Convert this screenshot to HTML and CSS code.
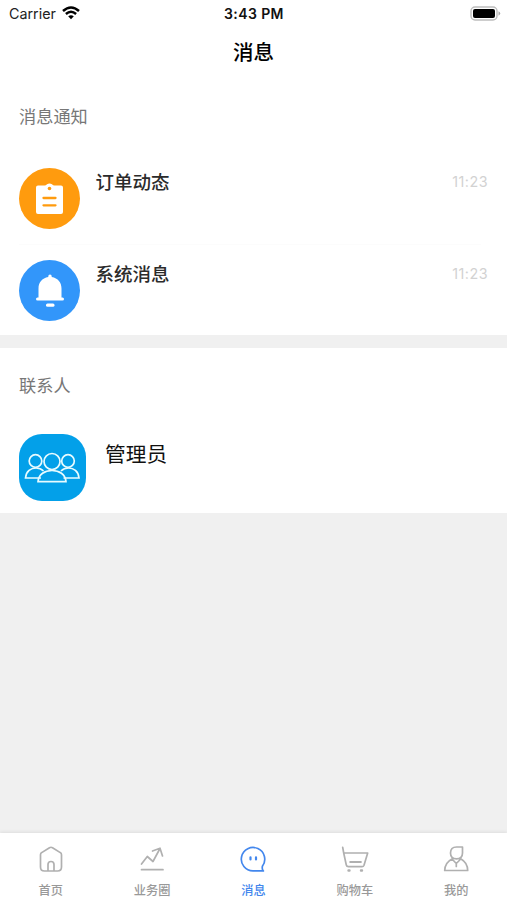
FILE: index.html
```html
<!DOCTYPE html>
<html lang="zh-CN">
<head>
<meta charset="utf-8">
<meta name="viewport" content="width=device-width, initial-scale=1">
<title>消息</title>
<link rel="stylesheet" href="styles.css">
</head>
<body>
<div class="app">
  <header class="status">
    <div class="carrier"><span>Carrier</span>
      <svg width="18" height="14" viewBox="0 0 18 14" fill="none" stroke="#000" stroke-width="2.5"><path d="M1 5Q9-2 17 5M3.900 8Q9 3.600 14.100 8"/><path d="M6.200 10.300Q9 8.200 11.800 10.300L9 13.200z" fill="#000" stroke="none"/></svg>
    </div>
    <div class="clock">3:43 PM</div>
    <svg class="battery" width="31" height="15" viewBox="0 0 31 15"><rect x="1" y="1" width="26" height="13" rx="4" fill="#fff" stroke="#bdbdbd" stroke-width="1.400"/><rect x="3" y="3" width="22" height="9" rx="2" fill="#000"/><path d="M28.500 5.300Q32 7.500 28.500 9.700z" fill="#aaa"/></svg>
  </header>
  <h1 class="title">消息</h1>
  <section class="notices">
    <h2 class="heading">消息通知</h2>
    <div class="row">
      <svg class="round" viewBox="0 0 61 61"><circle cx="30.500" cy="30.500" r="30.500" fill="#ff9b0e"/><path d="M19 17.500h6.500Q27 17.500 28 16.300Q30.500 14.500 33 16.300Q34 17.500 35.500 17.500H42Q44 17.500 44 19.500V44Q44 46 42 46H19Q17 46 17 44V19.500Q17 17.500 19 17.500z" fill="#fff"/><circle cx="30.500" cy="20.500" r="1.800" fill="#ff9b0e"/><path d="M24.500 30h12M24.500 37.300h12" stroke="#ff9b0e" stroke-width="2.300" stroke-linecap="round"/></svg>
      <span class="name">订单动态</span><time>11:23</time>
    </div>
    <div class="line"></div>
    <div class="row">
      <svg class="round" viewBox="0 0 61 61"><circle cx="30.500" cy="30.500" r="30.500" fill="#3296fa"/><path d="M29.300 17v-.8a1.700 1.700 0 0 1 3.400 0V17C39 18 42.500 22.500 42.500 28.500V37.500h1a1.500 1.500 0 0 1 0 3h-25a1.500 1.500 0 0 1 0-3h1V28.500C19.500 22.500 23 18 29.300 17z" fill="#fff"/><rect x="27" y="43.500" width="8.500" height="3.200" rx="1.500" fill="#fff"/></svg>
      <span class="name">系统消息</span><time>11:23</time>
    </div>
  </section>
  <section class="contacts">
    <h2 class="heading">联系人</h2>
    <div class="contact">
      <svg class="group" viewBox="0 0 67 67" fill="none" stroke="#e8fbff" stroke-width="1.700"><circle cx="16.500" cy="27" r="6.300"/><circle cx="49" cy="27" r="6.300"/><circle cx="33" cy="27.500" r="8"/><path d="M22 44H6.500C7 37 12 34 17 34q4.500 0 7.500 3M44.500 44H60C59.500 37 54.500 34 49.500 34q-4.500 0-7.500 3"/><path d="M19 47.700C19.500 40 26 36.500 33 36.500S46.500 40 47 47.700z"/></svg>
      <span class="person">管理员</span>
    </div>
  </section>
  <nav class="tabs">
    <a class="tab"><svg viewBox="0 0 28 28"><path d="M3.500 9.700Q3.500 8.300 4.700 7.600L12.500 2.700Q14 1.800 15.500 2.700L23.300 7.600Q24.500 8.300 24.500 9.700V22Q24.500 26 20.500 26H7.500Q3.500 26 3.500 22zM11 26V19.500a3 3 0 0 1 6 0V26"/></svg><span>首页</span></a>
    <a class="tab"><svg viewBox="0 0 28 28"><path d="M3.500 19L9.300 11.500L15 16.500L21.700 4M14.500 6L22 3.200L24.500 11M3.500 24.700H25"/></svg><span>业务圈</span></a>
    <a class="tab active"><svg viewBox="0 0 28 28"><path d="M23.400 21.200A11.700 11.700 0 1 0 14 25.900H24.400Q22.800 24.800 23.400 21.200"/><path d="M11.500 12.300v2.200M17 12.300v2.200" stroke-width="2.200"/></svg><span>消息</span></a>
    <a class="tab"><svg viewBox="0 0 28 28"><path d="M1.700 2.300L2.700 8L5.300 20Q5.700 21.700 7.500 21.700H21Q22.500 21.700 23 20.200L26.700 8H2.700"/><path d="M9.300 17H19.800" stroke-width="2.200"/><path d="M7.500 25.500h1M20 25.500h1" stroke-width="2.400"/></svg><span>购物车</span></a>
    <a class="tab"><svg viewBox="0 0 28 28"><path d="M20.500 2H14.500Q8.500 2 8.500 8Q8.500 13.800 14.500 13.800Q20.500 13.800 20.500 8zM10 14Q3 17.500 2.700 25.500H25.700Q25.500 17.500 19 14M10 14L14.300 18.500L18.800 14M14.300 18.500v3"/></svg><span>我的</span></a>
  </nav>
</div>
</body>
</html>
```
FILE: styles.css
```css
* { box-sizing: border-box; }
body { margin: 0; font-family: Inter, "Noto Sans CJK SC", sans-serif; background: #f0f0f0; }
h1, h2 { margin: 0; }
svg { display: block; flex: none; }
.app { height: 900px; display: flex; flex-direction: column; }
.status { height: 28px; background: #fff; display: grid; grid-template-columns: 1fr auto 1fr; align-items: center; padding: 0 6px 0 9px; }
.carrier { display: flex; align-items: center; gap: 6px; font-size: 14.3px; line-height: 20px; color: #222; }
.carrier svg { margin-bottom: 2px; }
.clock { font-size: 14px; line-height: 20px; font-weight: 600; color: #111; letter-spacing: .4px; margin-right: 2px; }
.battery { justify-self: end; margin-top: -1px; }
.title { height: 50px; background: #fff; text-align: center; font-size: 20.5px; line-height: 49px; font-weight: 500; color: #000; }
.notices { height: 257px; padding: 26px 19px 0; background: #fff; }
.heading { font-size: 17.2px; line-height: 26px; font-weight: 400; color: #777; }
.row { display: flex; align-items: flex-start; height: 61px; }
.notices .heading { margin-bottom: 38px; }
.round { width: 61px; height: 61px; }
.name { margin-left: 15.5px; font-size: 18.5px; line-height: 29px; font-weight: 500; color: #2b2b2b; }
.row time { margin-left: auto; font-size: 14.3px; line-height: 28px; letter-spacing: .5px; color: #d2d2d2; }
.line { height: 1px; margin: 15px 7px 15px 0; background: #fcfcfc; }
.contacts { height: 165px; margin-top: 13px; padding: 25px 19px 0; background: #fff; }
.contact { display: flex; align-items: flex-start; margin-top: 35px; }
.group { width: 67px; height: 67px; border-radius: 23px; background: #03a0e9; }
.person { margin-left: 19px; font-size: 20.7px; line-height: 41px; color: #111; }
.tabs { height: 67px; margin-top: auto; padding-top: 12px; background: #fff; display: grid; grid-template-columns: repeat(5, 1fr); box-shadow: 0 -1px 3px #ddd; }
.tab { display: flex; flex-direction: column; align-items: center; color: #b0b0b0; font-size: 12.2px; line-height: 18px; font-weight: 500; }
.tab svg { width: 28px; height: 28px; fill: none; stroke: currentColor; stroke-width: 1.7; stroke-linejoin: round; stroke-linecap: round; }
.tab span { margin-top: 9px; color: #999; }
.tab.active, .active span { color: #4387ed; }
```
